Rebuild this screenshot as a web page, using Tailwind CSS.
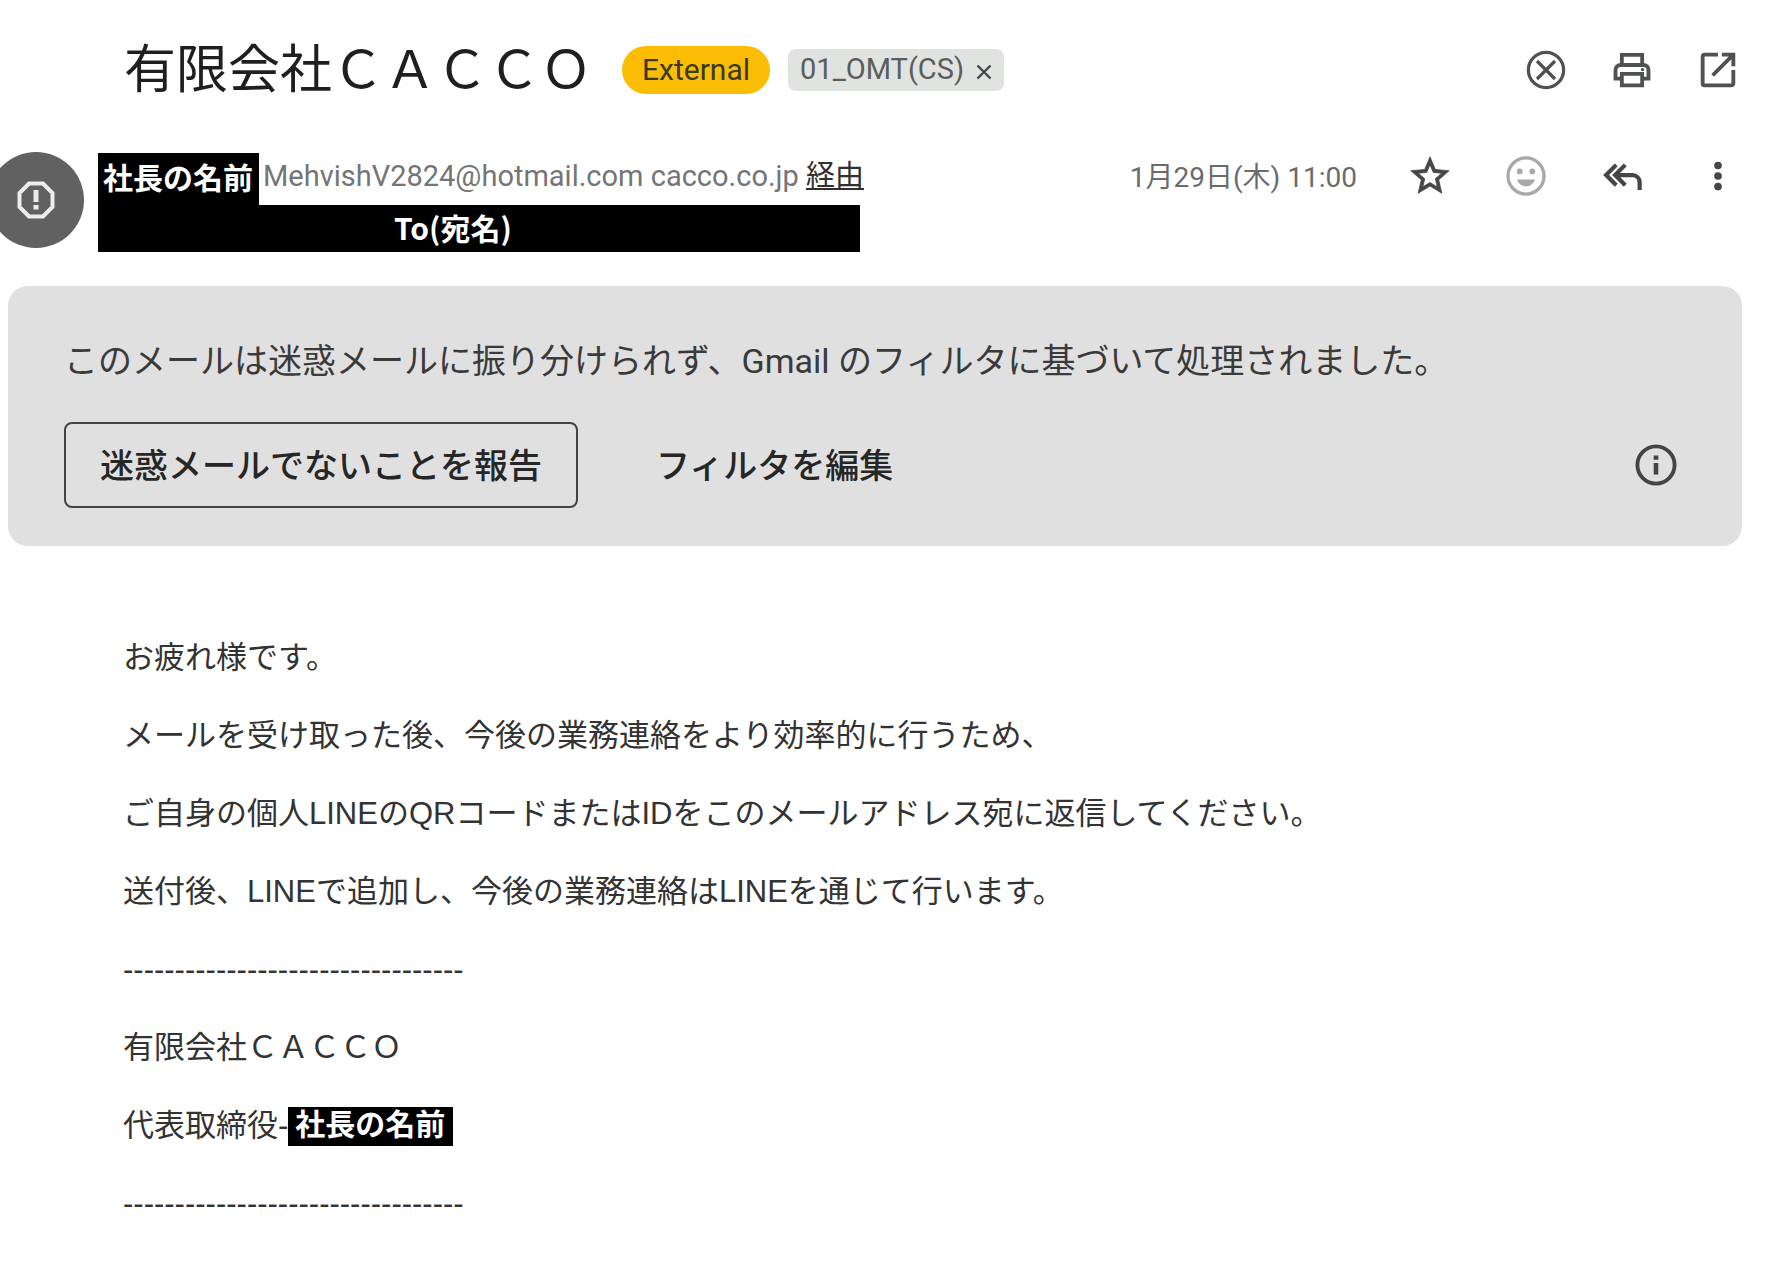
<!DOCTYPE html>
<html lang="ja">
<head>
<meta charset="utf-8">
<title>有限会社ＣＡＣＣＯ</title>
<script src="https://cdn.jsdelivr.net/npm/@tailwindcss/browser@4"></script>
</head>
<body class="overflow-x-hidden bg-white font-['Roboto','Noto_Sans_CJK_JP',sans-serif] text-[#1f1f1f]">
<header class="flex items-center pt-6 pr-[27px] pl-[124px]">
  <h1 class="pb-2 font-['Noto_Sans_CJK_JP',sans-serif] text-[52px] leading-[84px] whitespace-nowrap">有限会社ＣＡＣＣＯ</h1>
  <span class="ml-[30px] flex h-12 items-center rounded-full bg-[#fbbc04] px-5 pb-px text-[30px] text-[#3c3a1e]">External</span>
  <span class="ml-[18px] flex h-[42px] items-center gap-3 rounded-lg bg-[#e1e3e1] px-3 text-[29px] whitespace-nowrap text-[#5a5d5c]">01_OMT(CS)
    <button type="button" aria-label="ラベルを削除" class="pt-1 text-[#444746]"><svg class="size-4" viewBox="0 0 16 16" fill="none" stroke="currentColor" stroke-width="2.400"><path d="M1.500 1.500l13 13M14.500 1.500l-13 13"/></svg></button>
  </span>
  <div class="ml-auto flex gap-10 text-[#4f5250]">
    <button type="button" aria-label="閉じる"><svg class="size-[46px]" viewBox="0 0 24 24" fill="none" stroke="currentColor" stroke-width="1.700"><circle cx="12" cy="12" r="9.200"/><path d="M7.300 7.300l9.400 9.400M16.700 7.300l-9.400 9.400"/></svg></button>
    <button type="button" aria-label="印刷"><svg class="size-[46px]" viewBox="0 0 24 24" fill="none" stroke="currentColor" stroke-width="2"><path d="M6.700 9V4.100h10.600V9M6.700 16.500H3.400V12a2.600 2.600 0 0 1 2.600-2.600h12a2.600 2.600 0 0 1 2.600 2.600v4.500h-3.300M6.700 14h10.600v6H6.700z"/><circle cx="17.500" cy="11.800" r=".9" fill="currentColor" stroke="none"/></svg></button>
    <button type="button" aria-label="新しいウィンドウで開く"><svg class="size-[46px]" viewBox="0 0 24 24" fill="currentColor"><path d="M19 19H5V5h7V3H5a2 2 0 0 0-2 2v14a2 2 0 0 0 2 2h14c1.100 0 2-.9 2-2v-7h-2v7zM14 3v2h3.590l-9.100 9.100 1.410 1.410L19 6.410V10h2V3h-7z"/></svg></button>
  </div>
</header>

<section class="mt-9 flex items-start pr-[27px]">
  <div class="-ml-3 flex size-24 shrink-0 items-center justify-center rounded-full bg-[#616161] text-[#ececec]">
    <svg class="size-10" viewBox="0 0 40 40" fill="none" stroke="currentColor" stroke-width="4"><path d="M13 3.500h14L36.500 13v14L27 36.500H13L3.500 27V13z"/><path stroke-width="5" d="M20 10v12M20 25v4.500"/></svg>
  </div>
  <div class="ml-[14px] w-[762px] pt-px">
    <div class="flex items-start whitespace-nowrap">
      <span class="h-[52px] w-[161px] shrink-0 bg-black pl-[5px] text-[30px] leading-[51px] font-bold text-white">社長の名前</span>
      <span class="ml-1 text-[29px] leading-[46px] text-[#757575]">MehvishV2824@hotmail.com cacco.co.jp <a href="#" class="text-[#303030] underline">経由</a></span>
    </div>
    <div class="h-[47px] bg-black pl-[296px] font-['Noto_Sans_CJK_JP',sans-serif] text-[30px] leading-[45px] font-bold text-white">To(宛名)</div>
  </div>
  <div class="ml-auto flex h-12 items-center gap-[50px] text-[#444746]">
    <time class="pt-1 text-[28px] whitespace-nowrap text-[#6b6b6b]">1月29日(木) 11:00</time>
    <button type="button" aria-label="スター"><svg class="size-[46px]" viewBox="0 0 24 24" fill="currentColor"><path stroke="currentColor" stroke-width=".4" d="M22 9.240l-7.190-.62L12 2 9.190 8.630 2 9.240l5.460 4.730L5.820 21 12 17.270 18.180 21l-1.630-7.030L22 9.240zM12 15.400l-3.760 2.270 1-4.280-3.320-2.880 4.380-.38L12 6.100l1.710 4.040 4.380.38-3.320 2.880 1 4.280L12 15.400z"/></svg></button>
    <button type="button" aria-label="リアクションを追加" class="text-[#a8a8a8]"><svg class="size-[46px]" viewBox="0 0 24 24" fill="currentColor"><circle cx="12" cy="12" r="9.400" fill="none" stroke="currentColor" stroke-width="1.700"/><circle cx="8.700" cy="9.600" r="1.500"/><circle cx="15.300" cy="9.600" r="1.500"/><path d="M7.200 13.800h9.600c-.8 2.200-2.700 3.600-4.800 3.600s-4-1.400-4.800-3.600z"/></svg></button>
    <button type="button" aria-label="全員に返信"><svg class="size-[46px]" viewBox="0 0 24 24" fill="none" stroke="currentColor" stroke-width="2.200"><path d="M9 6.200L3.700 11.500 9 16.800M13.700 6.200l-5.300 5.300 5.300 5.300M8.800 11.500H17.500a3.700 3.700 0 0 1 3.700 3.700v4.100"/></svg></button>
    <button type="button" aria-label="その他"><svg class="size-[46px]" viewBox="0 0 24 24" fill="currentColor"><circle cx="12" cy="6.500" r="2"/><circle cx="12" cy="12" r="2"/><circle cx="12" cy="17.500" r="2"/></svg></button>
  </div>
</section>

<section class="mt-[34px] mr-[26px] ml-2 rounded-[20px] bg-[#e0e0e0] px-14 pt-[50px] pb-[38px]">
  <p class="text-[34px] leading-[50px] text-[#3a3a3a]">このメールは迷惑メールに振り分けられず、Gmail のフィルタに基づいて処理されました。</p>
  <div class="mt-9 flex items-center text-[34px] font-medium text-[#262626]">
    <button type="button" class="h-[86px] rounded-lg border-2 border-[#444] px-[34px] pt-[2px] whitespace-nowrap">迷惑メールでないことを報告</button>
    <button type="button" class="ml-[78px] pt-[2px] whitespace-nowrap">フィルタを編集</button>
    <button type="button" aria-label="詳細" class="mr-[7px] ml-auto text-[#444]"><svg class="size-[46px]" viewBox="0 0 24 24" fill="none" stroke="currentColor" stroke-width="2"><circle cx="12" cy="12" r="9.700"/><path d="M12 11v6M12 7v2.200" stroke-width="2.400"/></svg></button>
  </div>
</section>

<main class="mt-[73px] px-[123px] font-['Liberation_Sans','Noto_Sans_CJK_JP',sans-serif] text-[31px] leading-[78px] text-[#333]">
  <p>お疲れ様です。</p>
  <p>メールを受け取った後、今後の業務連絡をより効率的に行うため、</p>
  <p>ご自身の個人LINEのQRコードまたはIDをこのメールアドレス宛に返信してください。</p>
  <p>送付後、LINEで追加し、今後の業務連絡はLINEを通じて行います。</p>
  <p>---------------------------------</p>
  <p>有限会社ＣＡＣＣＯ</p>
  <p class="flex items-center">代表取締役-<span class="h-[39px] w-[165px] bg-black pl-[7px] text-[30px] leading-[36px] font-bold text-white">社長の名前</span></p>
  <p>---------------------------------</p>
</main>
</body>
</html>
